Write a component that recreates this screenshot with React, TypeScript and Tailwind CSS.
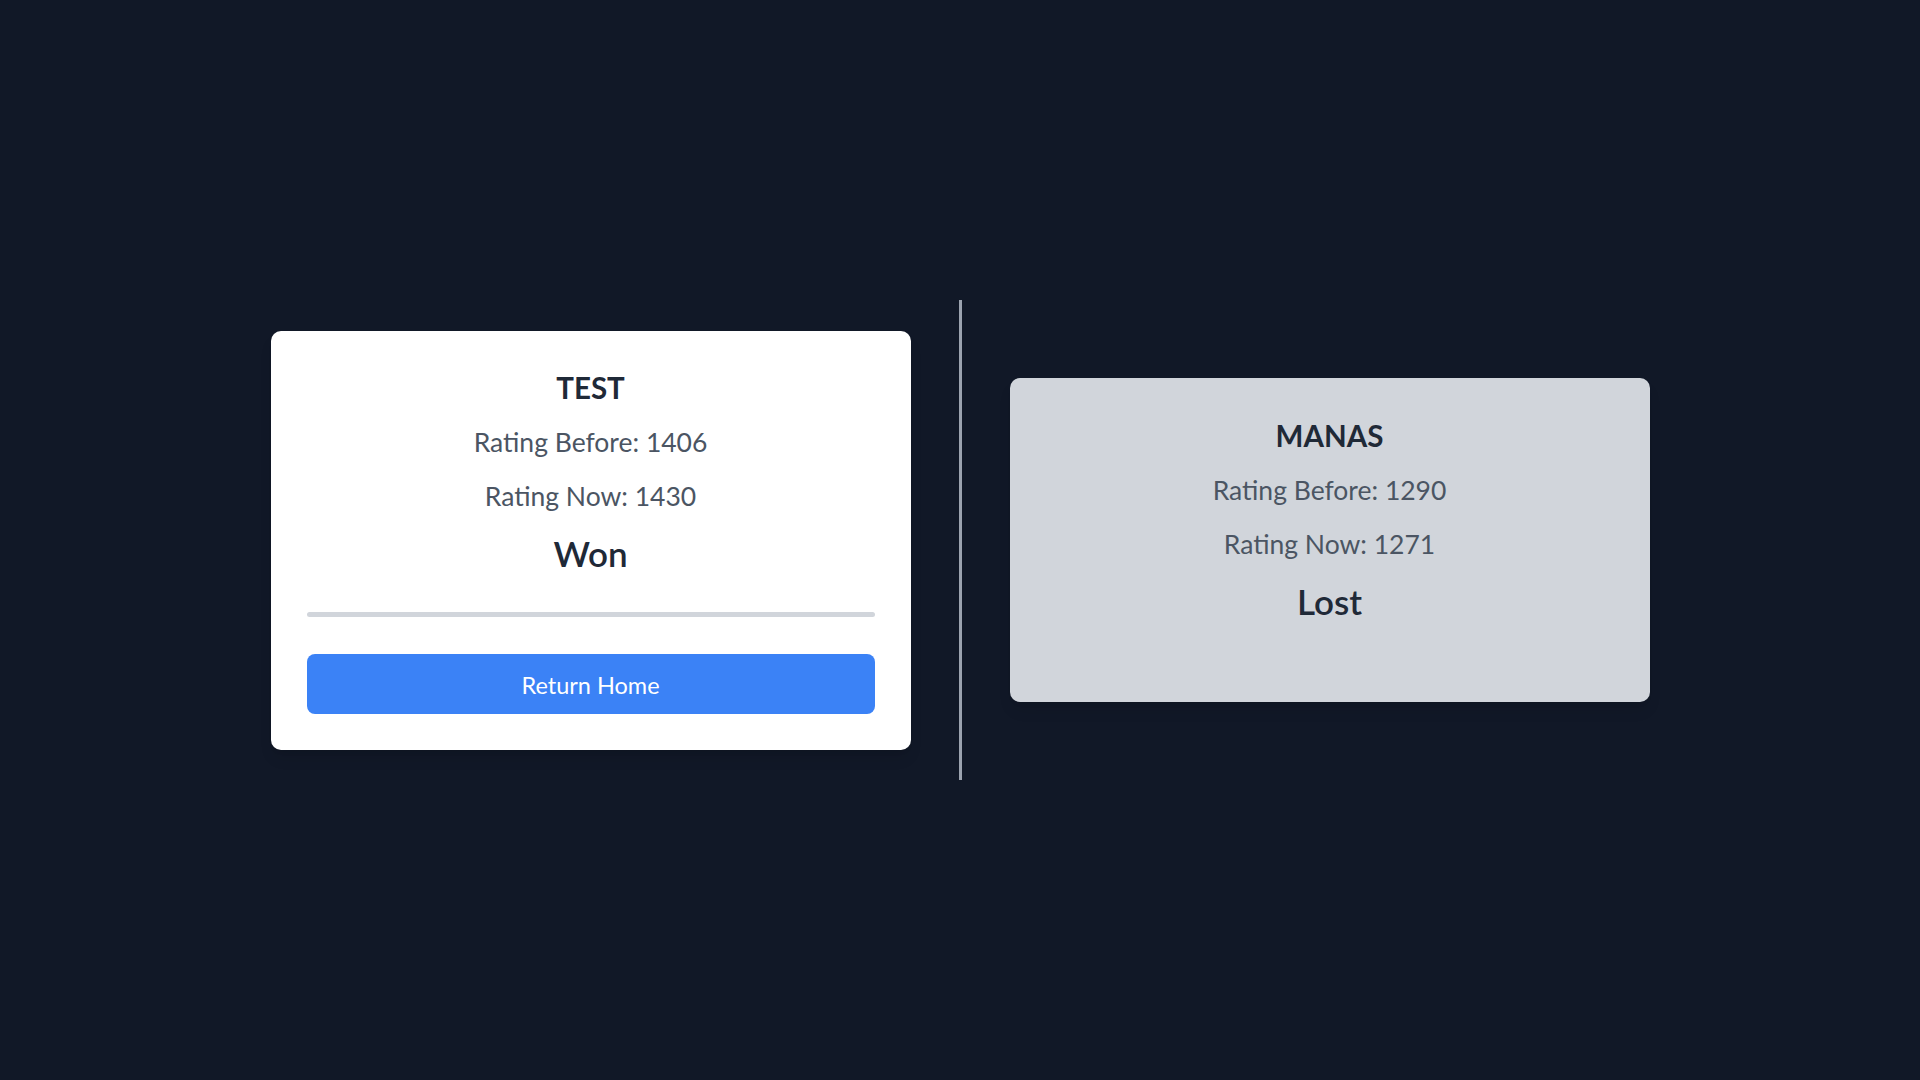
export default function App() {
  const font = { fontFamily: "Lato, 'Noto Sans', sans-serif" };
  return (
    <div
      className="min-h-screen w-full bg-[#111827] flex items-center justify-center gap-[48px]"
      style={font}
    >
      <div className="w-[640px] bg-white rounded-[10px] shadow-lg px-[36px] pt-[37px] pb-[36px] flex flex-col items-center text-center">
        <div className="text-[29.5px] leading-[40px] font-bold text-[#1f2937]">TEST</div>
        <div className="mt-[16px] text-[26.5px] leading-[36px] text-[#4b5563]">Rating Before: 1406</div>
        <div className="mt-[18px] text-[26.5px] leading-[36px] text-[#4b5563]">Rating Now: 1430</div>
        <div className="mt-[17px] text-[35px] leading-[44px] font-semibold text-[#1f2937]">Won</div>
        <div className="mt-[37px] w-full h-[5px] rounded-full bg-[#d1d5db]" />
        <button className="mt-[37px] w-full h-[60px] rounded-[8px] bg-[#3b82f6] text-white text-[23.5px] leading-none pt-[4px] flex items-center justify-center">
          Return Home
        </button>
      </div>
      <div className="w-[3px] h-[480px] bg-[#9ca3af]" />
      <div className="w-[640px] bg-[#d1d5db] rounded-[10px] shadow-lg px-[36px] pt-[38px] pb-[79px] flex flex-col items-center text-center">
        <div className="text-[29.5px] leading-[40px] font-bold text-[#1f2937]">MANAS</div>
        <div className="mt-[16px] text-[26.5px] leading-[36px] text-[#4b5563]">Rating Before: 1290</div>
        <div className="mt-[18px] text-[26.5px] leading-[36px] text-[#4b5563]">Rating Now: 1271</div>
        <div className="mt-[17px] text-[35px] leading-[44px] font-semibold text-[#1f2937]">Lost</div>
      </div>
    </div>
  );
}
